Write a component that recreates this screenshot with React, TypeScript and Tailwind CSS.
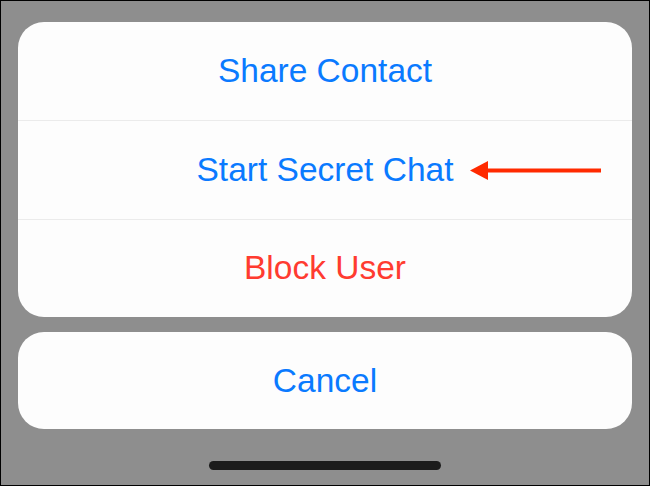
export default function App() {
  const rows = [
    { label: "Share Contact", color: "text-[#0a7aff]" },
    { label: "Start Secret Chat", color: "text-[#0a7aff]", arrow: true },
    { label: "Block User", color: "text-[#ff3b30]" },
  ];

  return (
    <div
      className="w-[650px] h-[486px] border border-black bg-[#8e8e8e] flex flex-col px-[17px] pt-[21px]"
      style={{ fontFamily: '"Liberation Sans", Arial, sans-serif' }}
    >
      {/* Action sheet */}
      <div className="bg-[#fdfdfd] rounded-[26px] overflow-hidden flex flex-col">
        {rows.map((row, i) => (
          <div
            key={row.label}
            className={`relative h-[98.3px] flex items-center justify-center ${i > 0 ? "border-t border-[#ebebeb]" : ""}`}
          >
            <span className={`text-[33.5px] leading-none ${row.color}`}>{row.label}</span>
            {row.arrow && (
              <svg
                className="absolute left-[452px] top-[39px]"
                width="131"
                height="21"
                viewBox="0 0 131 21"
              >
                <polygon points="0,10.5 18,1 18,20" fill="#ff2a00" />
                <rect x="14" y="8.5" width="117" height="4" fill="#ff2a00" />
              </svg>
            )}
          </div>
        ))}
      </div>

      {/* Cancel */}
      <div className="mt-[15px] bg-[#fdfdfd] rounded-[26px] h-[97px] flex items-center justify-center">
        <span className="text-[33.5px] leading-none text-[#0a7aff]">Cancel</span>
      </div>

      {/* Home indicator */}
      <div className="flex justify-center mt-[32px]">
        <div className="w-[232px] h-[9px] rounded-full bg-[#1c1c1c]" />
      </div>
    </div>
  );
}
